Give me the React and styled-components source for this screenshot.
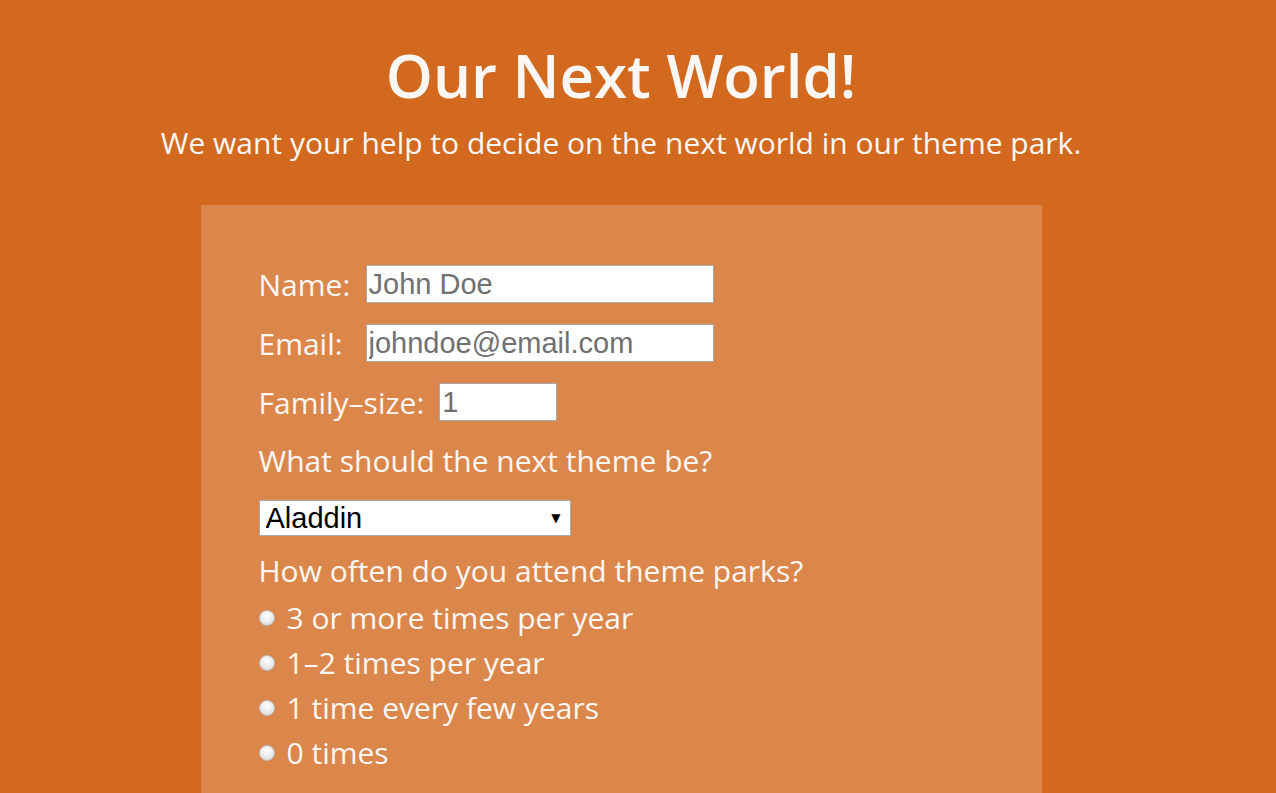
import React from "react";
import styled, { createGlobalStyle } from "styled-components";

const GlobalStyle = createGlobalStyle`
  html, body {
    margin: 0;
    padding: 0;
    background: #d2691e;
  }
`;

const Page = styled.div`
  width: 1242px;
  min-height: 793px;
  background: #d2691e;
  color: #fbf7f4;
  font-family: "Open Sans", "DejaVu Sans", sans-serif;
  overflow: hidden;
`;

const Header = styled.header`
  text-align: center;
  padding-top: 37px;
`;

const Title = styled.h1`
  margin: 0;
  font-size: 60px;
  line-height: 76px;
  font-weight: 600;
`;

const Subtitle = styled.p`
  margin: 0;
  font-size: 30px;
  line-height: 60px;
`;

const Form = styled.form`
  width: 841px;
  box-sizing: border-box;
  margin: 32px auto 0;
  background: rgba(255, 255, 255, 0.2);
  padding: 60px 58px 40px;
  min-height: 600px;
`;

const Row = styled.div`
  display: flex;
  align-items: center;
  gap: ${(p) => p.gap || 0}px;
  height: 38px;
  margin-bottom: 21px;
`;

const Label = styled.label`
  font-size: 30px;
  width: ${(p) => (p.w ? `${p.w}px` : "auto")};
  flex-shrink: 0;
`;

const TextInput = styled.input`
  width: ${(p) => p.w}px;
  height: 38px;
  box-sizing: border-box;
  border: 1px solid #a9a9a9;
  padding: 0 2px;
  font-family: "Liberation Sans", Arial, sans-serif;
  font-size: 29px;
  color: #707070;
  background: #fff;
  outline: none;
`;

const Question = styled.p`
  margin: 0;
  font-size: 30px;
  line-height: 38px;
`;

const SelectWrap = styled.div`
  position: relative;
  width: 312px;
  margin: 20px 0 16px;
`;

const Select = styled.select`
  appearance: none;
  display: block;
  width: 312px;
  height: 36px;
  border: 1px solid #a9a9a9;
  border-radius: 0;
  font-family: "Liberation Sans", Arial, sans-serif;
  font-size: 29px;
  color: #000;
  background: #fff;
  padding: 0 6px;
  outline: none;
`;

const Arrow = styled.span`
  position: absolute;
  right: 10px;
  top: 10px;
  font-family: "DejaVu Sans", sans-serif;
  font-size: 12px;
  line-height: 16px;
  color: #000;
  pointer-events: none;
`;

const RadioList = styled.div`
  display: flex;
  flex-direction: column;
  margin-top: 5px;
`;

const RadioRow = styled.label`
  display: flex;
  align-items: center;
  gap: 12px;
  height: 45px;
  font-size: 30px;
`;

const Radio = styled.input`
  appearance: none;
  width: 16px;
  height: 16px;
  margin: 0;
  border-radius: 50%;
  border: 1px solid #bdbdbd;
  background: radial-gradient(circle at 50% 35%, #ffffff 0%, #ececec 50%, #d2d2d2 100%);
`;

const options = [
  "3 or more times per year",
  "1–2 times per year",
  "1 time every few years",
  "0 times",
];

export default function App() {
  return (
    <Page>
      <GlobalStyle />
      <Header>
        <Title>Our Next World!</Title>
        <Subtitle>We want your help to decide on the next world in our theme park.</Subtitle>
      </Header>
      <Form>
        <Row>
          <Label w={107}>Name:</Label>
          <TextInput w={348} defaultValue="John Doe" />
        </Row>
        <Row>
          <Label w={107}>Email:</Label>
          <TextInput w={348} defaultValue="johndoe@email.com" />
        </Row>
        <Row gap={15}>
          <Label>Family–size:</Label>
          <TextInput w={118} defaultValue="1" />
        </Row>
        <Question>What should the next theme be?</Question>
        <SelectWrap>
          <Select defaultValue="Aladdin">
            <option>Aladdin</option>
            <option>Frozen</option>
            <option>Moana</option>
          </Select>
          <Arrow>▼</Arrow>
        </SelectWrap>
        <Question>How often do you attend theme parks?</Question>
        <RadioList>
          {options.map((o) => (
            <RadioRow key={o}>
              <Radio type="radio" name="often" />
              {o}
            </RadioRow>
          ))}
        </RadioList>
      </Form>
    </Page>
  );
}
